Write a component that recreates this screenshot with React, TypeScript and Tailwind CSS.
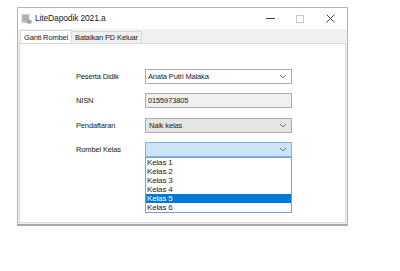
import React from 'react';

const Chevron: React.FC = () => (
  <svg width="8" height="5" viewBox="0 0 8 5" className="shrink-0">
    <path d="M1 1 L4 4 L7 1" fill="none" stroke="#606060" strokeWidth="0.9" />
  </svg>
);

const kelas = ['Kelas 1', 'Kelas 2', 'Kelas 3', 'Kelas 4', 'Kelas 5', 'Kelas 6'];

const App: React.FC = () => {
  return (
    <div
      className="w-[400px] h-[271px] bg-white text-[7.5px] tracking-[-0.15px] text-[#1a1a1a] overflow-hidden"
      style={{ fontFamily: '"Liberation Sans", Arial, sans-serif' }}
    >
      <div className="ml-[17px] mt-[7px] w-[331px] h-[219px] border border-[#b4b4b4] border-b-2 border-b-[#a8a8a8] flex flex-col bg-white">
        {/* title bar */}
        <div className="h-[21px] flex items-center pl-[3px] shrink-0">
          <svg width="11" height="11" viewBox="0 0 11 11" className="mr-[3px]">
            <rect x="0.5" y="1" width="8" height="9" fill="#c8c8c8" />
            <rect x="1.5" y="2.5" width="6" height="1" fill="#9a9a9a" />
            <rect x="1.5" y="4.5" width="6" height="1" fill="#9a9a9a" />
            <rect x="1.5" y="6.5" width="6" height="1" fill="#9a9a9a" />
            <rect x="6" y="7" width="4.5" height="3.5" fill="#a0a0a0" />
          </svg>
          <span className="text-[8.5px] text-[#222]">LiteDapodik 2021.a</span>
          <div className="ml-auto flex items-center h-full pr-[2px]">
            <div className="w-[30px] flex justify-center">
              <div className="w-[9px] h-px bg-[#444]" />
            </div>
            <div className="w-[30px] flex justify-center">
              <div className="w-[8px] h-[8px] border border-[#c8c8c8]" />
            </div>
            <div className="w-[30px] flex justify-center">
              <svg width="9" height="9" viewBox="0 0 9 9">
                <path d="M0.5 0.5 L8.5 8.5 M8.5 0.5 L0.5 8.5" stroke="#333" strokeWidth="0.9" />
              </svg>
            </div>
          </div>
        </div>

        {/* body */}
        <div className="flex-1 bg-[#f0f0f0] px-[1px] pb-[1px] flex flex-col">
          <div className="h-[14px] flex items-end pl-[1px] shrink-0">
            <div className="h-[14px] px-[3px] bg-white border border-b-0 border-[#d9d9d9] flex items-center relative top-px">
              Ganti Rombel
            </div>
            <div className="h-[12px] px-[3px] bg-[#f0f0f0] border border-l-0 border-b-0 border-[#d9d9d9] flex items-center">
              Batalkan PD Keluar
            </div>
          </div>
          <div className="flex-1 bg-white border border-[#d9d9d9] pt-[25px] pl-[56px] relative">
            <div className="flex items-center h-[15px]">
              <span className="w-[69px]">Peserta Didik</span>
              <div className="w-[147px] h-[15px] border border-[#acacac] bg-white flex items-center pl-[2px] pr-[4px]">
                <span className="flex-1">Anata Putri Malaka</span>
                <Chevron />
              </div>
            </div>
            <div className="flex items-center h-[15px] mt-[9px]">
              <span className="w-[69px]">NISN</span>
              <div className="w-[147px] h-[15px] border border-[#acacac] bg-[#f0f0f0] flex items-center pl-[2px]">
                0155973805
              </div>
            </div>
            <div className="flex items-center h-[15px] mt-[10px]">
              <span className="w-[69px]">Pendaftaran</span>
              <div className="w-[147px] h-[15px] border border-[#acacac] bg-[#e5e5e5] flex items-center pl-[3px] pr-[4px]">
                <span className="flex-1">Naik kelas</span>
                <Chevron />
              </div>
            </div>
            <div className="flex items-center h-[15px] mt-[9px]">
              <span className="w-[69px]">Rombel Kelas</span>
              <div className="relative">
                <div className="w-[147px] h-[15px] border border-[#7eb4ea] bg-[#cce4f7] flex items-center justify-end pr-[4px]">
                  <Chevron />
                </div>
                <div className="absolute left-0 top-[15px] w-[147px] bg-white border border-[#7a9fd6]">
                  {kelas.map((k) => (
                    <div
                      key={k}
                      className={`h-[9px] leading-[9px] pl-[1px] text-[8px] ${k === 'Kelas 5' ? 'bg-[#0078d7] text-white' : ''}`}
                    >
                      {k}
                    </div>
                  ))}
                </div>
              </div>
            </div>
          </div>
        </div>
      </div>
    </div>
  );
};

export default App;
